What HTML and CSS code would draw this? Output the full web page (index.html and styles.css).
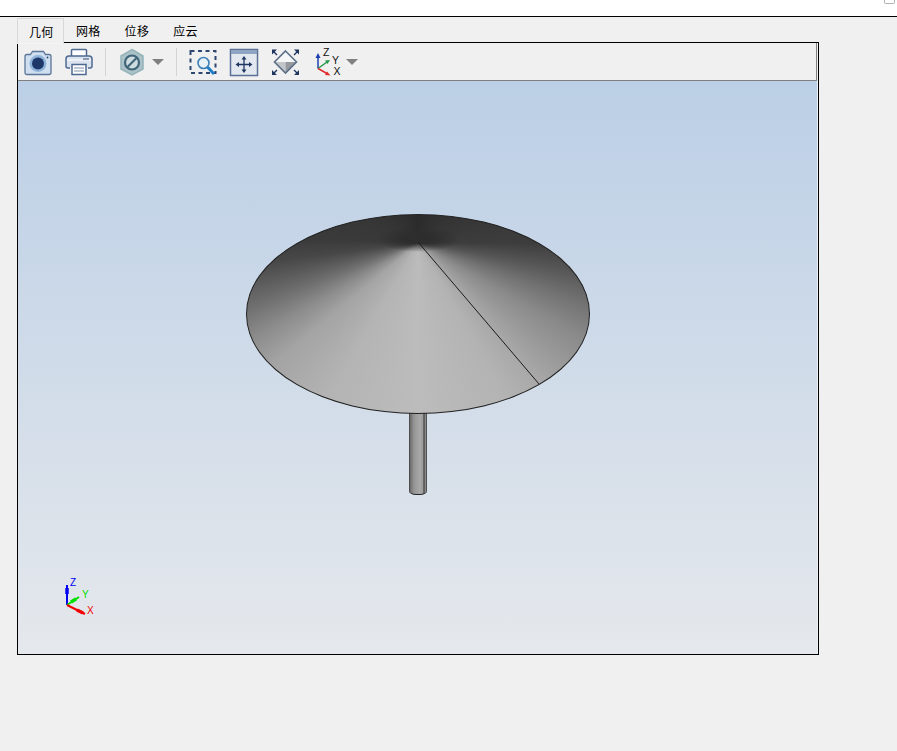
FILE: index.html
```html
<!DOCTYPE html>
<html lang="zh">
<head>
    <meta charset="UTF-8">
    <meta name="viewport" content="width=device-width, initial-scale=1.0">
    <title>几何</title>
    <link rel="stylesheet" href="styles.css">
</head>
<body>
    <div class="topbar"><span class="corner-box"></span></div>

    <div class="tabs">
        <div class="tab active">几何</div>
        <div class="tab">网格</div>
        <div class="tab">位移</div>
        <div class="tab">应云</div>
    </div>

    <div class="panel">
        <div class="toolbar">
            <!-- camera -->
            <svg class="tool" viewBox="0 0 28 28">
                <path d="M1 8.500q0-2 2-2h3.500l2-3h11l2 3H25q2 0 2 2v16q0 2-2 2H3q-2 0-2-2z" fill="#cfdff0" stroke="#5b7698" stroke-width="1.300"/>
                <circle cx="14" cy="15.500" r="8.500" fill="#8fb2d8"/>
                <circle cx="14" cy="15.500" r="6" fill="#1d3768"/>
                <circle cx="23.500" cy="9.500" r="1" fill="#2c4a78"/>
            </svg>
            <!-- printer -->
            <svg class="tool gap-l" viewBox="0 0 28 28">
                <path d="M6.500 8V2.500q0-1 1-1h13q1 0 1 1V8" fill="#fff" stroke="#4f6a90" stroke-width="1.500"/>
                <path d="M5 20H3q-2 0-2-2v-7q0-3 3-3h20q3 0 3 3v7q0 2-2 2h-2" fill="#dbe3ee" stroke="#4f6a90" stroke-width="1.500"/>
                <path d="M2 12h24" stroke="#fff" stroke-width="1"/>
                <rect x="18" y="10" width="6" height="2" fill="#8a9ab0"/>
                <rect x="7" y="16.500" width="14" height="10" fill="#fff" stroke="#4f6a90" stroke-width="1.500"/>
                <path d="M9 20h10M9 23h10" stroke="#a9b6c8" stroke-width="1.500"/>
            </svg>
            <span class="sep"></span>
            <!-- hide / show -->
            <svg class="tool" viewBox="0 0 28 28">
                <path d="M14 1.500 25 8v13L14 27 3 21V8z" fill="#abc3c8" stroke="#93b3b9" stroke-width="1.500"/>
                <circle cx="14" cy="14.500" r="7" fill="#cfdcdf" stroke="#406478" stroke-width="2.200"/>
                <path d="M9.500 19 18.500 10" stroke="#406478" stroke-width="2.200"/>
            </svg>
            <span class="caret"></span>
            <span class="sep"></span>
            <!-- zoom box -->
            <svg class="tool" viewBox="0 0 28 28">
                <rect x="1.500" y="3" width="25" height="22" fill="none" stroke="#2e4670" stroke-width="2" stroke-dasharray="4 3.500"/>
                <circle cx="14.500" cy="15" r="5.500" fill="#e8f0f8" stroke="#3f7fb8" stroke-width="1.600"/>
                <path d="M18.500 19 25 26" stroke="#1e7fc8" stroke-width="3"/>
            </svg>
            <!-- fit all -->
            <svg class="tool gap-m" viewBox="0 0 28 28">
                <rect x="0.500" y="1.500" width="27" height="26" fill="#e3e7ef" stroke="#5a7096" stroke-width="1.500"/>
                <rect x="1" y="2" width="26" height="4" fill="#8fa3c2"/>
                <g fill="#1f3560" stroke="#1f3560">
                    <path d="M14 10v13M8 16.500h12" stroke-width="1.300"/>
                    <path d="M14 8l-2.500 3.500h5zM14 25l-2.500-3.500h5zM5.500 16.500 9 14v5zM22.500 16.500 19 14v5z" stroke="none"/>
                </g>
            </svg>
            <!-- isometric -->
            <svg class="tool gap-s" viewBox="0 0 28 28">
                <path d="M14.500 2.500 26 14H3z" fill="#f4f6f8"/>
                <path d="M3 14h11.500v11.500z" fill="#c2c5c9"/>
                <path d="M14.500 14H26L14.500 25.500z" fill="#96999f"/>
                <path d="M14.500 3 25.500 14 14.500 25 3.500 14z" fill="none" stroke="#5c7088" stroke-width="1.600"/>
                <g fill="#1f3560" stroke="#1f3560">
                    <path d="M2 3l4 4M27 3l-4 4M2 26l4-4M27 26l-4-4" stroke-width="1.400"/>
                    <path d="M1 1.500h5l-5 5zM28 1.500h-5l5 5zM1 27h5l-5-5zM28 27h-5l5-5z" stroke="none"/>
                </g>
            </svg>
            <!-- axes -->
            <svg class="tool gap-m2" viewBox="0 0 28 28">
                <path d="M4 20.500V8" stroke="#1c3fb0" stroke-width="1.500"/>
                <path d="M4 5 1.500 10h5z" fill="#1c3fb0"/>
                <path d="M4 20.500 13 14" stroke="#1f9a4a" stroke-width="1.500"/>
                <path d="M16 12l-5 .5 2.500 3.500z" fill="#1f9a4a"/>
                <path d="M4 20.500 13 25.500" stroke="#e02c2c" stroke-width="1.500"/>
                <path d="M16.500 27.500l-5.500-.5 2-3.500z" fill="#e02c2c"/>
                <text class="axis-label" x="9" y="8">Z</text>
                <text class="axis-label" x="18" y="15.500">Y</text>
                <text class="axis-label" x="19.500" y="27">X</text>
            </svg>
            <span class="caret caret-end"></span>
        </div>

        <div class="viewport">
            <div class="stem"></div>
            <div class="cone">
                <svg class="seam" viewBox="0 0 344 199">
                    <path d="M172 28 293 170" stroke="#1c1c1c" stroke-width="1" fill="none"/>
                </svg>
            </div>

            <svg class="triad" viewBox="0 0 40 44">
                <path d="M5 31V11" stroke="#0000f0" stroke-width="2"/>
                <path d="M5 20V14" stroke="#0000f0" stroke-width="3.500"/>
                <path d="M5 31 17 23" stroke="#00e000" stroke-width="2"/>
                <path d="M9 28 14 25" stroke="#00e000" stroke-width="3.500"/>
                <path d="M5 31 23 40" stroke="#f00000" stroke-width="2"/>
                <path d="M15 36 21 39" stroke="#f00000" stroke-width="3.500"/>
                <text class="triad-label z" x="8" y="12">Z</text>
                <text class="triad-label y" x="20" y="24">Y</text>
                <text class="triad-label x" x="25" y="40">X</text>
            </svg>
        </div>
    </div>
</body>
</html>
```

FILE: styles.css
```css
body {
    margin: 0;
    height: 751px;
    overflow: hidden;
    background-color: #f0f0f0;
    font-family: "Noto Sans CJK SC", "Liberation Sans", sans-serif;
}
.topbar {
    display: flex;
    justify-content: flex-end;
    height: 16px;
    padding-right: 2px;
    background-color: #fff;
    border-bottom: 1px solid #000;
}
.corner-box {
    width: 9px;
    height: 3px;
    background-color: #fff;
    border: 1px solid #b4b4b4;
    border-top: none;
    border-radius: 0 0 2px 2px;
}
.tabs {
    display: flex;
    height: 24px;
    margin: 1px 0 0 17px;
}
.tab {
    padding: 0 12px;
    font-size: 12px;
    line-height: 25px;
    letter-spacing: 0.3px;
    color: #000;
}
.tab.active {
    position: relative;
    z-index: 1;
    height: 24px;
    padding: 0 9.400px 0 11px;
    background-color: #f0f0f0;
    border: 1px solid #d9d9d9;
    border-bottom: 1px solid #f4f4f4;
}
.panel {
    display: flex;
    flex-direction: column;
    box-sizing: border-box;
    width: 802px;
    height: 613px;
    margin-left: 17px;
    border: 1px solid #000;
}
.toolbar {
    display: flex;
    align-items: center;
    box-sizing: border-box;
    height: 38px;
    margin-right: 1px;
    padding-left: 6px;
    border-right: 1px solid #808080;
    border-bottom: 1px solid #808080;
}
.tool {
    flex: none;
    width: 28px;
    height: 28px;
    overflow: visible;
}
.gap-l {
    margin-left: 13px;
}
.gap-m {
    margin-left: 13px;
}
.gap-s {
    margin-left: 13px;
}
.gap-m2 {
    margin-left: 15px;
}
.sep {
    width: 1px;
    height: 28px;
    margin: 0 12px;
    background-color: #d4d4d4;
}
.caret {
    width: 0;
    height: 0;
    margin-left: 6px;
    border-top: 6px solid #808080;
    border-left: 6px solid transparent;
    border-right: 6px solid transparent;
}
.caret-end {
    margin-left: 4px;
}
.axis-label {
    font-family: "Liberation Sans", sans-serif;
    font-size: 10.500px;
    fill: #111;
}
.viewport {
    position: relative;
    flex: 1;
    background: linear-gradient(#bbcfe6, #e5e8ec);
    border-right: 1px solid #edf0f5;
}
.cone {
    position: absolute;
    left: 228px;
    top: 133px;
    box-sizing: border-box;
    width: 344px;
    height: 199.500px;
    border: 1px solid #222;
    border-radius: 50%;
    overflow: hidden;
    background: conic-gradient(at 171px 28px,
        #2b2b2b 0deg,
        #373737 70deg,
        #3d3d3d 90deg,
        #555 100deg,
        #727272 110deg,
        #8a8a8a 120deg,
        #a8a8a8 139deg,
        #b3b3b3 150deg,
        #bcbcbc 180deg,
        #b4b4b4 210deg,
        #a4a4a4 230deg,
        #8c8c8c 240deg,
        #6c6c6c 250deg,
        #474747 263deg,
        #3a3a3a 272deg,
        #2b2b2b 360deg);
}
/* softens the shading right around the tip */
.cone::before {
    content: "";
    position: absolute;
    inset: 0;
    background: radial-gradient(ellipse 42px 13px at 171px 24px, rgba(45, 45, 45, 0.95) 35%, rgba(45, 45, 45, 0) 100%);
}
.seam {
    position: absolute;
    left: -1px;
    top: -1px;
    width: 344px;
    height: 199px;
}
.stem {
    position: absolute;
    left: 391px;
    top: 328px;
    box-sizing: border-box;
    width: 18px;
    height: 86px;
    background: linear-gradient(90deg,
        #3c3c3c 0,
        #707070 1.500px,
        #959595 5px,
        #a8a8a8 11px,
        #9a9a9a 14px,
        #333 15px,
        #888 16px,
        #8a8a8a 16.500px,
        #333 18px);
    border-bottom: 1px solid #222;
    border-radius: 0 0 7px 7px / 0 0 4px 4px;
}
.triad {
    position: absolute;
    left: 44px;
    top: 493px;
    width: 40px;
    height: 44px;
}
.triad-label {
    font-family: "Liberation Sans", sans-serif;
    font-size: 10px;
}
.triad-label.z {
    fill: #0000f0;
}
.triad-label.y {
    fill: #00e000;
}
.triad-label.x {
    fill: #f00000;
}
```
